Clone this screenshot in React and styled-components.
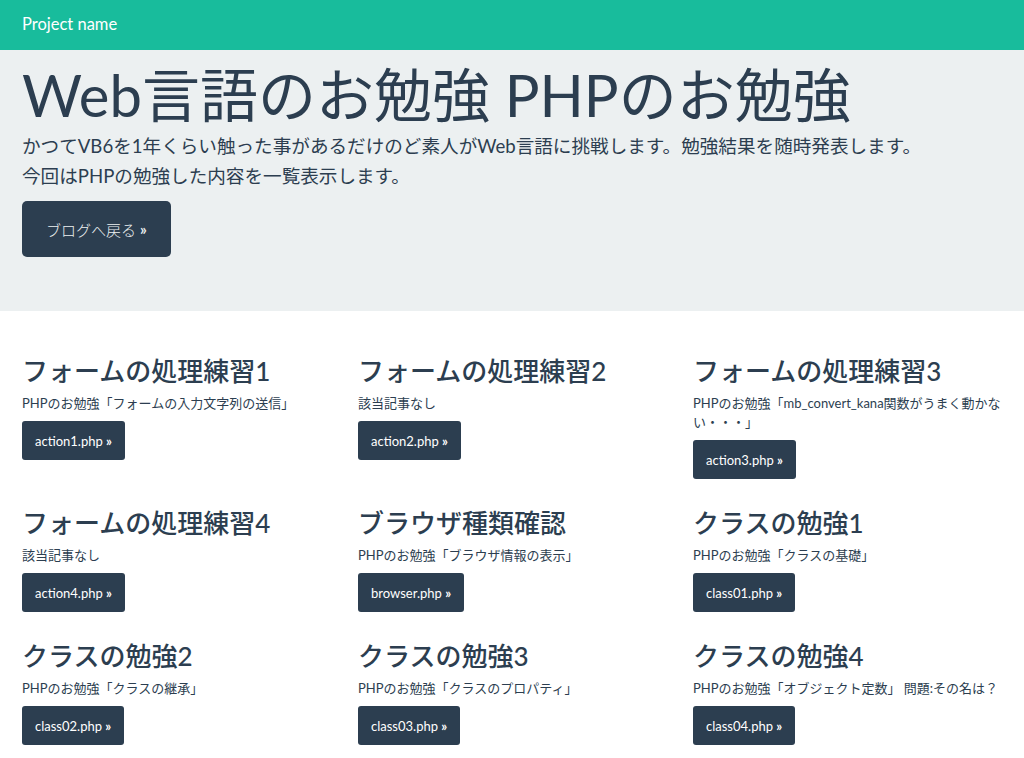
import React from 'react';
import styled, { createGlobalStyle } from 'styled-components';

const GlobalStyle = createGlobalStyle`
  body {
    margin: 0;
    background: #fff;
    color: #2c3e50;
    font-family: Lato, "Noto Sans CJK JP", sans-serif;
  }
`;

const lessons = [
  { title: 'フォームの処理練習1', note: 'PHPのお勉強「フォームの入力文字列の送信」', file: 'action1.php' },
  { title: 'フォームの処理練習2', note: '該当記事なし', file: 'action2.php' },
  { title: 'フォームの処理練習3', note: ['PHPのお勉強「mb_convert_kana関数がうまく動かな', 'い・・・」'], file: 'action3.php' },
  { title: 'フォームの処理練習4', note: '該当記事なし', file: 'action4.php' },
  { title: 'ブラウザ種類確認', note: 'PHPのお勉強「ブラウザ情報の表示」', file: 'browser.php' },
  { title: 'クラスの勉強1', note: 'PHPのお勉強「クラスの基礎」', file: 'class01.php' },
  { title: 'クラスの勉強2', note: 'PHPのお勉強「クラスの継承」', file: 'class02.php' },
  { title: 'クラスの勉強3', note: 'PHPのお勉強「クラスのプロパティ」', file: 'class03.php' },
  { title: 'クラスの勉強4', note: 'PHPのお勉強「オブジェクト定数」 問題:その名は？', file: 'class04.php' },
];

function App() {
  return (
    <>
      <GlobalStyle />
      <Navbar>
        <Brand href="#">Project name</Brand>
      </Navbar>
      <Jumbotron>
        <Title>Web言語のお勉強 PHPのお勉強</Title>
        <Lead>
          かつてVB6を1年くらい触った事があるだけのど素人がWeb言語に挑戦します。勉強結果を随時発表します。
          <br />
          今回はPHPの勉強した内容を一覧表示します。
        </Lead>
        <BigButton href="#">
          ブログへ戻る <Raquo>&raquo;</Raquo>
        </BigButton>
      </Jumbotron>
      <Grid>
        {lessons.map((l) => (
          <Card key={l.file}>
            <CardTitle>{l.title}</CardTitle>
            <Note>
              {Array.isArray(l.note) ? (
                <>
                  {l.note[0]}
                  <br />
                  {l.note[1]}
                </>
              ) : (
                l.note
              )}
            </Note>
            <SmallButton href="#">
              {l.file} <Raquo>&raquo;</Raquo>
            </SmallButton>
          </Card>
        ))}
      </Grid>
    </>
  );
}

const Navbar = styled.nav`
  height: 50px;
  background: #18bc9c;
  display: flex;
  align-items: center;
  padding: 0 22px;
`;

const Brand = styled.a`
  color: #fff;
  font-size: 16.5px;
  text-decoration: none;
  margin-top: -3px;
`;

const Jumbotron = styled.section`
  background: #ecf0f1;
  padding: 13px 22px 54px;
  margin-bottom: 17px;
`;

const Title = styled.h1`
  margin: 0;
  font-size: 58px;
  font-weight: 400;
  line-height: 64px;
`;

const Lead = styled.p`
  margin: 4px 0 10px;
  font-size: 18.6px;
  line-height: 30px;
`;

const Raquo = styled.b`
  font-weight: 700;
`;

const BigButton = styled.a`
  display: inline-flex;
  align-items: center;
  white-space: pre;
  height: 56px;
  box-sizing: border-box;
  padding: 0 24px;
  background: #2c3e50;
  color: #ecf0f1;
  border-radius: 5px;
  font-size: 15px;
  font-weight: 300;
  text-decoration: none;
`;

const Grid = styled.main`
  display: grid;
  grid-template-columns: 336px 335px 1fr;
  row-gap: 29px;
  padding: 28px 0 0 22px;
`;

const Card = styled.div`
  display: flex;
  flex-direction: column;
  align-items: flex-start;
`;

const CardTitle = styled.h2`
  margin: 0;
  font-size: 26px;
  font-weight: 500;
  line-height: 30px;
`;

const Note = styled.p`
  margin: 7.5px 0 8.5px;
  font-size: 13px;
  line-height: 19px;
`;

const SmallButton = styled.a`
  display: inline-flex;
  align-items: center;
  white-space: pre;
  height: 39px;
  box-sizing: border-box;
  padding: 0 13px;
  background: #2c3e50;
  color: #fff;
  border-radius: 3px;
  font-size: 13px;
  text-decoration: none;
`;

export default App;
